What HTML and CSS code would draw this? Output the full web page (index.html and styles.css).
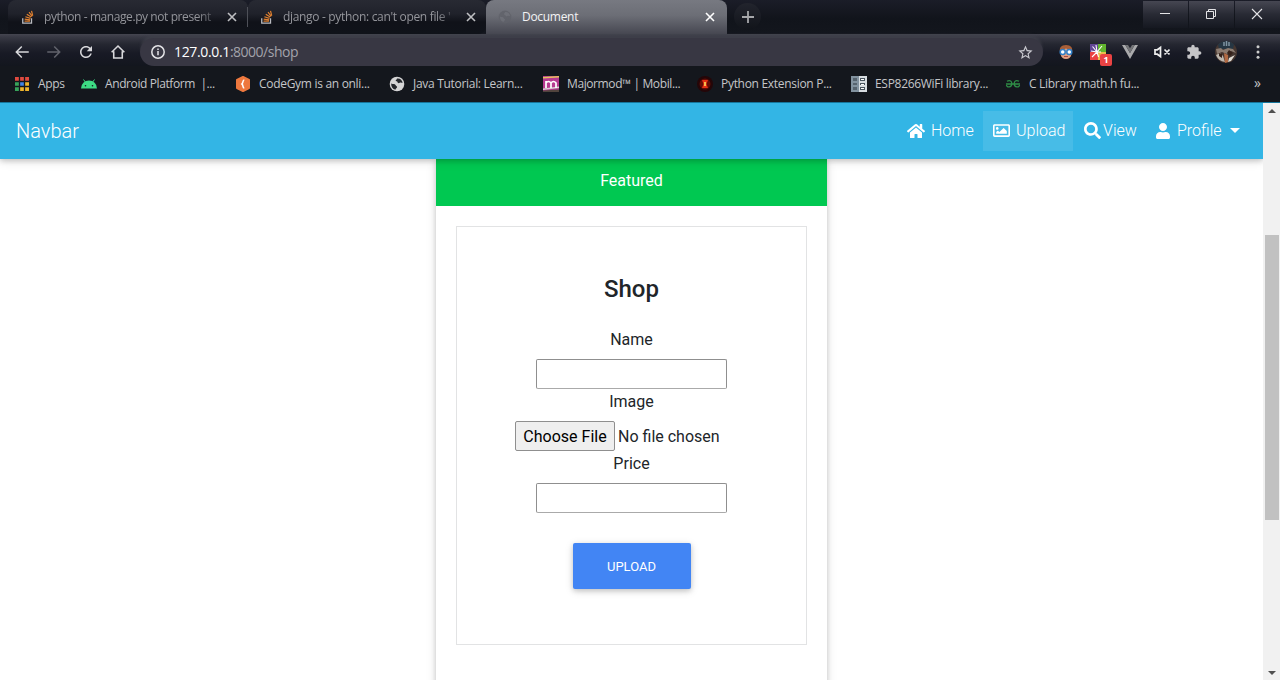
FILE: index.html
```html
<!DOCTYPE html>
<html lang="en">
<head>
<meta charset="utf-8">
<title>Document</title>
<link rel="stylesheet" href="styles.css">
</head>
<body>
<svg class="defs" width="0" height="0">
  <symbol id="stack" viewBox="0 0 16 16"><path d="M2 9.5V15h10V9.5" fill="none" stroke="#b9bbc0" stroke-width="1.5"/><path d="M4 12.8h6.2M4.2 10.4l6.2.8M5 7.7l5.8 1.9M6.6 4.8l5.1 3.3M9.2 2.3l3.6 4.9M12 1l1.4 5.5" stroke="#e08030" stroke-width="1.4"/></symbol>
  <symbol id="close" viewBox="0 0 10 10"><path d="M1 1l8 8M9 1L1 9" stroke="currentColor" stroke-width="1.6"/></symbol>
  <symbol id="globe" viewBox="0 0 16 16"><circle cx="8" cy="8" r="7.3" fill="currentColor"/><path d="M2.200 7.500C4 8.500 6 7.500 6.500 9c.5 1.500 2 1 1.500 2.500-.5 1-1.500 1-1.500 2.300C3.500 13 2 10.500 2.200 7.500zM8 2.500C11 2 13.200 4 13.700 6.800c-1.200.2-2-.6-3 0-1 .7-2.200.2-2.200-.8 0-.8-1.800-.5-1.800-1.500S8 4 8 2.500z" fill="var(--cut)"/></symbol>
</svg>
<div class="tabs">
  <div class="tab"><svg class="fav"><use href="#stack"/></svg><span class="title t1">python - manage.py not present</span><svg class="x"><use href="#close"/></svg></div>
  <div class="tab second"><svg class="fav"><use href="#stack"/></svg><span class="title t2">django - python: can't open file '</span><svg class="x"><use href="#close"/></svg></div>
  <div class="tab active"><svg class="fav dim"><use href="#globe"/></svg><span class="title">Document</span><svg class="x"><use href="#close"/></svg></div>
  <div class="plus"><svg width="12" height="12" viewBox="0 0 12 12"><path d="M6 0v12M0 6h12" stroke="#a6a7aa" stroke-width="1.8"/></svg></div>
  <div class="controls">
    <div><svg width="12" height="12" viewBox="0 0 12 12"><path d="M1 5.500h10" stroke="#e4e4e6"/></svg></div>
    <div><svg width="12" height="12" viewBox="0 0 12 12"><path d="M1.500 3.500h7v7h-7zM3.500 3.500v-2h7v7h-2" fill="none" stroke="#e4e4e6"/></svg></div>
    <div><svg width="12" height="12" viewBox="0 0 12 12"><path d="M1 1l10 10M11 1L1 11" stroke="#e4e4e6" stroke-width="1.100"/></svg></div>
  </div>
</div>

<div class="toolbar">
  <div class="cell"><svg viewBox="0 0 24 24"><path d="M21 11H6.800l5.600-5.600L11 4l-8 8 8 8 1.400-1.400L6.800 13H21z"/></svg></div>
  <div class="cell off"><svg viewBox="0 0 24 24"><path d="M3 11h14.200l-5.600-5.600L13 4l8 8-8 8-1.400-1.400 5.600-5.600H3z"/></svg></div>
  <div class="cell"><svg viewBox="0 0 24 24"><path d="M17.650 6.350C16.200 4.900 14.210 4 12 4c-4.420 0-7.990 3.580-7.990 8s3.570 8 7.990 8c3.730 0 6.840-2.550 7.730-6h-2.080c-.82 2.330-3.040 4-5.650 4-3.310 0-6-2.690-6-6s2.690-6 6-6c1.660 0 3.140.69 4.220 1.780L13 11h7V4l-2.350 2.350z"/></svg></div>
  <div class="cell"><svg viewBox="0 0 24 24"><path d="M3.500 12.300L12 4l8.500 8.300M6.300 11v9h11.400v-9" fill="none" stroke="#d8d8db" stroke-width="2.100"/></svg></div>
  <div class="omnibox">
    <svg width="14" height="14" viewBox="0 0 14 14"><circle cx="7" cy="7" r="6.200" fill="none" stroke="#e4e4e7" stroke-width="1.500"/><path d="M7 6v4.300M7 3.500v1.500" stroke="#e4e4e7" stroke-width="1.500"/></svg>
    <span class="url"><b>127.0.0.1</b>:8000/shop</span>
    <svg class="star" width="17" height="17" viewBox="0 0 24 24"><path fill="#c9c9cf" d="M22 9.240l-7.190-.62L12 2 9.190 8.630 2 9.240l5.460 4.730L5.820 21 12 17.270 18.180 21l-1.630-7.030L22 9.240zM12 15.400l-3.760 2.270 1-4.280-3.320-2.880 4.380-.38L12 6.100l1.710 4.040 4.380.38-3.320 2.880 1 4.280L12 15.400z"/></svg>
  </div>
  <div class="cell"><svg class="s16" viewBox="0 0 16 16"><path d="M2 8C1 4 3 1 8 1s7 3 6 7l-1 4-3 2H6l-3-2z" fill="#a85f38"/><path d="M3 6.500l5-2 5 2V11c0 2-2 4-5 4s-5-2-5-4z" fill="#e2a183"/><g fill="#fff" stroke="#3280c8" stroke-width="1.500"><circle cx="4.700" cy="8" r="2.500"/><circle cx="11.300" cy="8" r="2.500"/></g><path d="M6 12.500h4" stroke="#a54b45"/></svg></div>
  <div class="cell ext"><svg class="s16" viewBox="0 0 16 16"><path fill="#614594" d="M0 0h8v8H0z"/><path fill="#62b52e" d="M8 0h8v8H8z"/><path fill="#ea4242" d="M0 8h8v8H0z"/><path fill="#e8bf4b" d="M8 8h8v8H8z"/><path d="M2.500 2.500L7 8M6 1l1 7M12 2L7 8M1 7l6 1M2 13l5-5M7 8l1.500 5M7 8l4 0" stroke="#fff" stroke-width="1.100"/></svg><span class="badge">1</span></div>
  <div class="cell"><svg class="s16" viewBox="0 0 16 16"><path fill="#a9a9ab" d="M0 1h3.300L8 9l4.700-8H16L8 15z"/><path fill="#737477" d="M3.300 1H6l2 3.300L10 1h2.700L8 9z"/></svg></div>
  <div class="cell"><svg class="s16" viewBox="0 0 16 16"><path d="M1 5.800h2.300L6.500 3.500v9L3.300 10.200H1zM10.500 5.500l5 5M15.500 5.500l-5 5" fill="none" stroke="#eee" stroke-width="1.700"/></svg></div>
  <div class="cell"><svg class="s16" viewBox="0 0 24 24"><path fill="#c5c5c7" d="M20.500 11H19V7c0-1.100-.9-2-2-2h-4V3.500C13 2.120 11.880 1 10.500 1S8 2.120 8 3.500V5H4c-1.100 0-1.990.9-1.990 2v3.800H3.500c1.490 0 2.700 1.210 2.700 2.700s-1.210 2.700-2.700 2.700H2V20c0 1.100.9 2 2 2h3.800v-1.500c0-1.490 1.210-2.700 2.700-2.700s2.700 1.210 2.700 2.700V22H17c1.100 0 2-.9 2-2v-4h1.500c1.380 0 2.500-1.120 2.500-2.500S21.880 11 20.500 11z"/></svg></div>
  <div class="cell"><svg class="avatar" viewBox="0 0 22 22"><circle cx="11" cy="11" r="11" fill="#453630"/><path d="M3 3.500A11 11 0 0 1 19 3.500L18 8H4z" fill="#263643"/><path d="M9 1v4M11.500 0v5M14 1v4" stroke="#8094a2" stroke-width="1.500"/><path d="M1 8l5-1 2 2 5-2 5 1 3 4-5-2-4 3-5-2-5 2z" fill="#8b7b70"/><path d="M1 14l4-2 3 3 2 6a11 11 0 0 1-9-7z" fill="#bdb6ad"/><path d="M9 12l4 2v7l-3 1z" fill="#b26a43"/><path d="M14 17l6-3-4 6-3 1z" fill="#e0dbd3"/><path d="M4 12l3 1v4l-3-2zM14 9l4 3-3 3-3-3z" fill="#352119"/></svg></div>
  <div class="cell"><svg class="s16" viewBox="0 0 16 16"><g fill="#ccc"><circle cx="8" cy="2.700" r="1.500"/><circle cx="8" cy="8" r="1.500"/><circle cx="8" cy="13.300" r="1.500"/></g></svg></div>
</div>

<div class="bookmarks">
  <div class="bm b0"><svg viewBox="0 0 16 16"><path fill="#e04a3f" d="M1 1h4v4H1zM6 1h4v4H6zM11 1h4v4h-4z"/><path fill="#37a35a" d="M1 6h4v4H1zM1 11h4v4H1z"/><path fill="#4285e8" d="M6 6h4v4H6z"/><path fill="#efb52c" d="M11 6h4v4h-4zM6 11h4v4H6zM11 11h4v4h-4z"/><path d="M5.500 0v16M10.500 0v16M0 5.500h16M0 10.500h16" stroke="#14171d" stroke-width="1.300"/></svg><span>Apps</span></div>
  <div class="bm b1"><svg viewBox="0 0 16 16"><path fill="#3ddc84" d="M0 12.500a8 8 0 0 1 16 0z"/><path d="M2.500 3.500L5 7M13.500 3.500L11 7" stroke="#3ddc84"/><circle cx="4.500" cy="9.700" r=".8" fill="#14171c"/><circle cx="11.500" cy="9.700" r=".8" fill="#14171c"/></svg><span>Android Platform &nbsp;|...</span></div>
  <div class="bm b2"><svg viewBox="0 0 16 16"><path fill="#ee783e" stroke="#ee783e" stroke-width="2" stroke-linejoin="round" d="M8 1l6 3v8l-6 3-6-3V4z"/><path d="M9.300 4C7.500 4 8.300 7 7 8c1.300 1 .5 4 2.300 4" fill="none" stroke="#fff" stroke-width="1.600"/></svg><span>CodeGym is an onli...</span></div>
  <div class="bm b3"><svg class="globe"><use href="#globe"/></svg><span>Java Tutorial: Learn...</span></div>
  <div class="bm b4"><svg viewBox="0 0 16 16"><path fill="#b63a91" d="M0 0h16v16H0z"/><path fill="#e4c35d" d="M0 1l16-1v1.500L0 2.500z"/><path fill="#d8d0d5" d="M0 12.500l16-2v1.500L0 14z"/><path fill="#51443d" d="M0 14.500l16-1v2.500H0z"/><path d="M3 12V5M3 7q2.500-3 5 0v5M8 7q2.500-3 5 0v5" fill="none" stroke="#fff" stroke-width="1.700"/></svg><span>Majormod™ | Mobil...</span></div>
  <div class="bm b5"><svg viewBox="0 0 16 16"><circle cx="8" cy="8" r="8" fill="#250608"/><circle cx="8" cy="8" r="5.500" fill="#650d07"/><path d="M5 4h6l-1.500 4 1.500 4H5l1.500-4z" fill="#e53115"/><path d="M7.200 6h1.600v4H7.200z" fill="#ffe05a"/></svg><span>Python Extension P...</span></div>
  <div class="bm b6"><svg viewBox="0 0 16 16"><path fill="#82929f" d="M0 0h8v16H0z"/><path fill="#d7dde1" d="M8 0h8v16H8z"/><path d="M2 2h4v3H2zM2 7h4v2H2zM2 11h4v3H2z" fill="#56636e"/><path d="M9 2h5v3H9zM9 7h5v2H9zM9 11h5v3H9z" fill="#4a5660"/><path d="M10 3h3v1h-3zM10 8h3v1h-3zM10 12h3v1h-3z" fill="#fff"/></svg><span>ESP8266WiFi library...</span></div>
  <div class="bm b7"><svg viewBox="0 0 16 16"><path d="M1 8h14M2 5.300c3-1.700 5 0 4.800 2.700-.2 3.500-5 4-5.300 1M14 5.300c-3-1.700-5 0-4.800 2.700.2 3.500 5 4 5.300 1" fill="none" stroke="#2f8d46" stroke-width="1.300"/></svg><span>C Library math.h fu...</span></div>
  <div class="more">»</div>
</div>

<div class="viewport">
  <div class="page">
    <nav class="navbar">
      <span class="brand">Navbar</span>
      <div class="links">
        <a class="home"><svg width="18" height="16" viewBox="0 0 576 512"><path d="M280.370 148.260L96 300.110V464a16 16 0 0 0 16 16l112.060-.29a16 16 0 0 0 15.920-16V368a16 16 0 0 1 16-16h64a16 16 0 0 1 16 16v95.640a16 16 0 0 0 16 16.050L464 480a16 16 0 0 0 16-16V300L295.670 148.260a12.190 12.190 0 0 0-15.300 0zM571.600 251.470L488 182.560V44.050a12 12 0 0 0-12-12h-56a12 12 0 0 0-12 12v72.610L318.470 43a48 48 0 0 0-61 0L4.340 251.470a12 12 0 0 0-1.600 16.900l25.500 31A12 12 0 0 0 45.150 301l235.220-193.740a12.190 12.190 0 0 1 15.300 0L530.900 301a12 12 0 0 0 16.900-1.600l25.500-31a12 12 0 0 0-1.700-16.930z"/></svg>Home</a>
        <a class="upload"><svg width="17" height="17" viewBox="0 0 512 512"><path d="M464 64H48C21.490 64 0 85.490 0 112v288c0 26.510 21.490 48 48 48h416c26.510 0 48-21.490 48-48V112c0-26.510-21.490-48-48-48zm-6 336H54a6 6 0 0 1-6-6V118a6 6 0 0 1 6-6h404a6 6 0 0 1 6 6v276a6 6 0 0 1-6 6zM128 152c-22.091 0-40 17.909-40 40s17.909 40 40 40 40-17.909 40-40-17.909-40-40-40zM96 352h320v-80l-87.515-87.515c-4.686-4.686-12.284-4.686-16.971 0L192 304l-39.515-39.515c-4.686-4.686-12.284-4.686-16.971 0L96 304v48z"/></svg>Upload</a>
        <a class="view"><svg width="17" height="17" viewBox="0 0 512 512"><path d="M505 442.700L405.300 343c-4.500-4.500-10.600-7-17-7H372c27.600-35.300 44-79.700 44-128C416 93.100 322.900 0 208 0S0 93.100 0 208s93.100 208 208 208c48.300 0 92.700-16.400 128-44v16.300c0 6.400 2.500 12.500 7 17l99.700 99.700c9.400 9.400 24.600 9.400 33.900 0l28.300-28.300c9.400-9.400 9.400-24.600.1-34zM208 336c-70.700 0-128-57.200-128-128 0-70.700 57.200-128 128-128 70.700 0 128 57.200 128 128 0 70.700-57.200 128-128 128z"/></svg>View</a>
        <a class="profile"><svg width="14" height="16" viewBox="0 0 448 512"><path d="M224 256c70.700 0 128-57.300 128-128S294.700 0 224 0 96 57.300 96 128s57.300 128 128 128zm89.600 32h-16.700c-22.200 10.200-46.900 16-72.900 16s-50.600-5.800-72.900-16h-16.700C60.200 288 0 348.200 0 422.400V464c0 26.500 21.500 48 48 48h352c26.500 0 48-21.500 48-48v-41.600c0-74.200-60.200-134.400-134.400-134.400z"/></svg>Profile<i class="caret"></i></a>
      </div>
    </nav>
    <section class="card">
      <div class="card-header">Featured</div>
      <div class="card-body">
        <form class="shop">
          <h4>Shop</h4>
          <label>Name</label>
          <div class="field"></div>
          <label>Image</label>
          <div class="file"><span class="choose">Choose File</span><span>No file chosen</span></div>
          <label>Price</label>
          <div class="field"></div>
          <div class="submit">UPLOAD</div>
        </form>
      </div>
    </section>
  </div>
  <div class="scrollbar"><i class="up"></i><div class="thumb"></div><i class="down"></i></div>
</div>
</body>
</html>
```
FILE: styles.css
```css
* { box-sizing: border-box; }
body { margin: 0; width: 1280px; height: 680px; overflow: hidden; display: flex; flex-direction: column; background: #14171d; font-family: "Open Sans", "Noto Sans", sans-serif; font-size: 12px; }
svg { flex: none; display: block; }
.defs { position: absolute; }

.tabs { display: flex; height: 34px; flex: none; padding-left: 8px; background: linear-gradient(#1b1d28, #11141b 55%, #13161d); }
.tab { display: flex; align-items: center; width: 240px; height: 34px; padding: 0 11px 1px 13px; border-radius: 8px 8px 0 0; background: linear-gradient(#282a33, #20222b 40%, #101219 65%, #10131a); color: #94959b; position: relative; }
.tab.second { width: 238px; padding: 0 10px 1px 12px; border-radius: 8px 8px 8px 0; }
.tab.second::before { content: ""; position: absolute; left: -1px; top: 7px; width: 1px; height: 20px; background: #4e5058; }
.tab.active { width: 241px; background: linear-gradient(#777981, #6c6e76 45%, #464751); color: #f3f3f4; padding: 0 12px 1px 12px; }
.fav { width: 14px; height: 14px; margin-right: 9px; }
.active .fav { margin-right: 10px; }
.dim { color: #60626a; --cut: #6f7179; opacity: .8; }
.title { flex: 1; white-space: pre; letter-spacing: -.3px; }
.t1, .t2 { -webkit-mask-image: linear-gradient(90deg, #000 88%, transparent 104%); margin-right: 10px; }
.t1 { letter-spacing: -.42px; }
.t2 { letter-spacing: -.32px; }
.tab .x { width: 10px; height: 10px; color: #bfc0c3; }
.active .x { color: #fff; }
.plus { width: 27px; height: 27px; margin: 3px 0 0 7px; border-radius: 50%; background: linear-gradient(#22242d, #11141a); display: grid; place-items: center; }
.controls { display: flex; gap: 1px; margin-left: auto; padding-top: 1px; }
.controls div { width: 45px; height: 27px; padding: 0 2px 1px 0; background: linear-gradient(#464752, #282a34 50%, #151820); display: grid; place-items: center; }

.toolbar { display: flex; height: 32px; flex: none; padding-left: 6px; background: linear-gradient(#454650, #3a3b46 8%, #252731 32%, #181a25 60%, #13161e); }
.cell { width: 32px; padding-top: 4px; display: grid; place-items: center; position: relative; }
.cell svg { width: 18px; height: 18px; fill: #d8d8db; }
.cell.off svg { fill: #62636c; }
.cell .s16 { width: 16px; height: 16px; }
.cell .avatar { width: 22px; height: 22px; }
.badge { position: absolute; left: 18px; top: 20px; width: 12px; height: 12px; border-radius: 2px; background: #ea4343; color: #fff; font: bold 9px/12px "Open Sans", sans-serif; text-align: center; }
.omnibox { display: flex; align-items: center; width: 903px; margin: 4px 7px 0 6px; height: 28px; border-radius: 14px; background: #383743; padding: 0 9px 0 11px; box-shadow: 0 -4px 3px -1px rgba(64, 65, 76, .7); }
.url { margin-left: 9px; padding-bottom: 1px; font-size: 14px; letter-spacing: -.5px; color: #a3a3ab; }
.url b { font-weight: 400; color: #fff; letter-spacing: -.35px; }
.star { margin-left: auto; }

.bookmarks { display: grid; grid-template-columns: 67px repeat(7, 154px) 1fr; height: 36px; flex: none; padding-left: 14px; align-items: center; color: #c5c6c9; }
.bm { display: flex; align-items: center; gap: 8px; white-space: nowrap; letter-spacing: -.3px; }
.bm span { padding-bottom: 1px; }
.b1, .b4 { letter-spacing: -.4px; }
.bm svg { width: 16px; height: 16px; }
.globe { color: #d5d5d6; --cut: #24272c; }
.more { justify-self: end; padding: 0 19px 3px 0; font-size: 14px; }

.viewport { display: flex; height: 578px; flex: none; background: #fff; border-top: 1px solid #16769c; font-family: Roboto, sans-serif; font-size: 16px; color: #212529; line-height: 24px; }
.page { width: 1263px; height: 577px; overflow: hidden; }
.navbar { display: flex; align-items: center; justify-content: space-between; height: 55.6px; padding: 0 16px; background: #33b5e5; color: #fff; font-weight: 300; box-shadow: 0 2px 5px rgba(0, 0, 0, .16), 0 2px 10px rgba(0, 0, 0, .12); position: relative; z-index: 2; }
.brand { font-size: 20px; }
.links { display: flex; }
.links a { display: flex; align-items: center; height: 40px; }
.links svg { fill: #fff; }
.home { width: 76px; gap: 6px; }
.upload { width: 90px; padding-left: 10px; gap: 6px; background: rgba(255, 255, 255, .1); }
.view { width: 72px; padding-left: 11px; gap: 2px; }
.profile { width: 102px; padding-left: 11px; gap: 7px; }
.caret { border: 5px solid transparent; border-top-color: #fff; border-bottom: 0; margin-left: 1px; }

.card { width: 391px; height: 560px; margin-left: 436px; background: #fff; box-shadow: 0 2px 5px rgba(0, 0, 0, .16), 0 2px 10px rgba(0, 0, 0, .12); }
.card-header { height: 47.4px; padding-top: 10.4px; text-align: center; background: #00c851; color: #fff; }
.card-body { padding: 20px 20px 0; }
.shop { display: flex; flex-direction: column; align-items: center; height: 419px; padding-top: 48px; border: 1px solid #e2e3e4; }
h4 { margin: 0 0 24px; font-size: 24px; font-weight: 500; line-height: 29px; }
label { height: 24px; margin-bottom: 7px; }
.field, .file { margin-bottom: 1px; }
.field { width: 191px; height: 30px; border: 1px solid #8f8f8f; border-bottom-color: #aaa; border-radius: 2px; background: #fff; }
.file { display: flex; width: 233px; gap: 3px; line-height: 32px; height: 30px; }
.choose { width: 100px; height: 30px; line-height: 30px; text-align: center; border: 1px solid #8f8f8f; border-radius: 2px; background: #efefef; color: #000; }
.submit { width: 118px; height: 46px; margin-top: 29px; border-radius: 2px; background: #4285f4; color: #fff; font-size: 13px; line-height: 47px; text-align: center; box-shadow: 0 2px 5px rgba(0, 0, 0, .16), 0 2px 10px rgba(0, 0, 0, .12); }

.scrollbar { width: 17px; background: #f1f1f1; display: flex; flex-direction: column; align-items: center; padding: 6px 0 5px; }
.up, .down { border: 4px solid transparent; }
.up { border-bottom-color: #505050; border-top: 0; }
.down { border-top-color: #505050; border-bottom: 0; margin-top: auto; }
.thumb { width: 14px; height: 285px; margin-top: 122px; background: #c1c1c1; }
```
